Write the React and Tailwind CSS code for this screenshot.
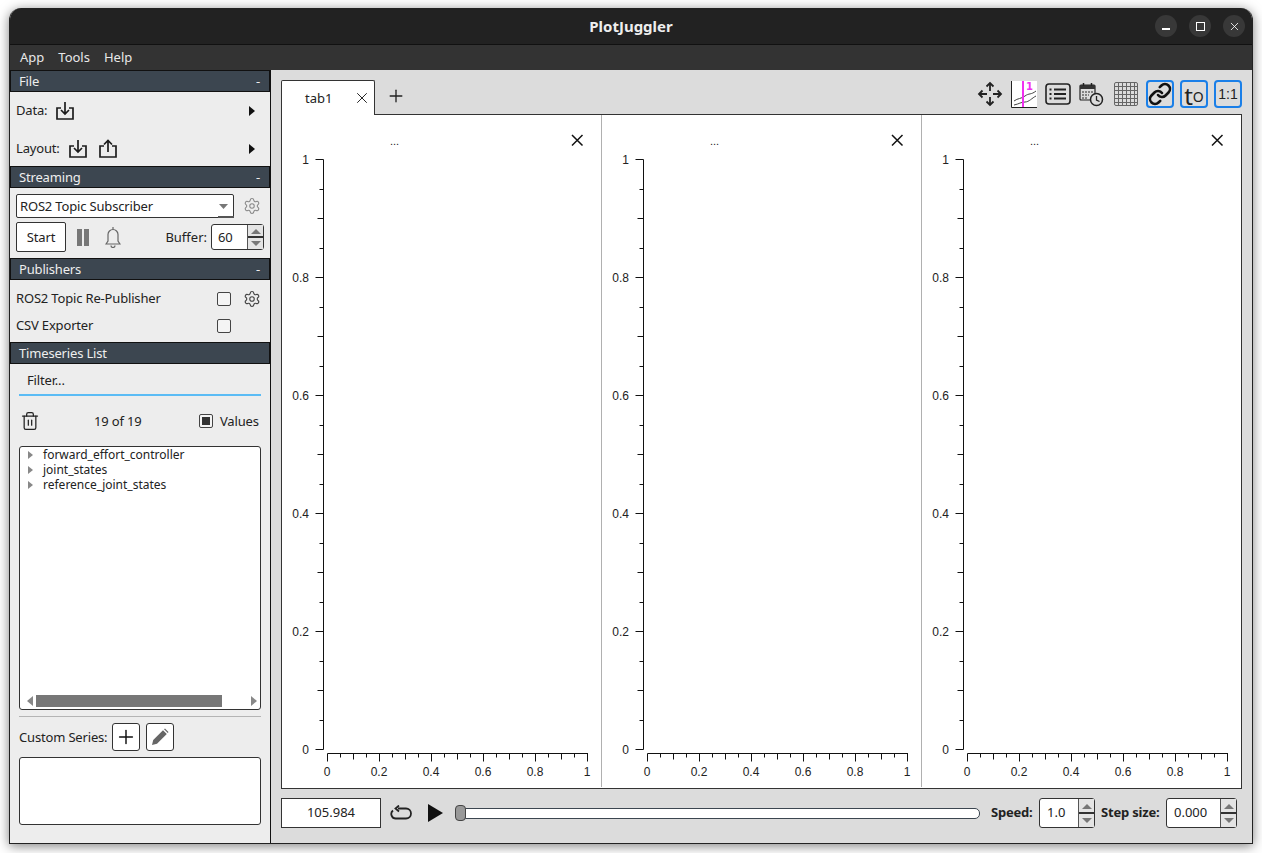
import React from "react";
import { Settings, Trash2, Plus, X, Link } from "lucide-react";

function SectionHeader({ title, collapse = true }) {
  return (
    <div className="-mt-px flex h-[22px] items-center justify-between border border-[#111] bg-[#3c4650] pl-2 pr-[9px] pt-px text-[13px] text-[#eeeeee]">
      <span>{title}</span>
      {collapse && <span>-</span>}
    </div>
  );
}

function TrayIcon({ up = false }) {
  return (
    <svg width="20" height="20" viewBox="0 0 20 20" fill="none" stroke="#1c1c1c" strokeWidth="1.7">
      <path d="M6 7H2v11h16V7h-4" />
      {up ? (
        <path d="M10 13V1.500M6 5.500l4-4 4 4" />
      ) : (
        <path d="M10 1v12M6 9l4 4 4-4" />
      )}
    </svg>
  );
}

function RightArrow() {
  return (
    <svg width="8" height="10" viewBox="0 0 8 10">
      <path d="M1 0l6 5-6 5z" fill="#111" />
    </svg>
  );
}

function Spin({ value, width, height, textClass = "" }) {
  return (
    <div className={`flex rounded-[3px] border border-[#333] bg-white ${width} ${height}`}>
      <div className={`flex flex-1 items-center text-[13px] text-[#222] ${textClass}`}>{value}</div>
      <div className="flex w-[16px] flex-col border-l border-[#555]">
        <div className="flex flex-1 items-center justify-center border-b border-[#333] bg-[#e4e4e4]">
          <svg width="10" height="6"><path d="M0 6L5 1l5 5z" fill="#777" /></svg>
        </div>
        <div className="flex flex-1 items-center justify-center border-t border-[#333] bg-[#e4e4e4]">
          <svg width="10" height="6"><path d="M0 0l5 5 5-5z" fill="#777" /></svg>
        </div>
      </div>
    </div>
  );
}

function Checkbox() {
  return <div className="h-[14px] w-[14px] rounded-[2px] border border-[#444] bg-[#f4f4f4]" />;
}

function TreeRow({ label }) {
  return (
    <div className="flex h-[15px] items-center tracking-normal">
      <svg width="5" height="8" className="ml-[8px] mr-[10px]">
        <path d="M0 0l5 4-5 4z" fill="#888" />
      </svg>
      <span className="text-[12px] text-[#222]">{label}</span>
    </div>
  );
}

function Sidebar() {
  return (
    <div className="flex w-[261px] flex-none flex-col border-r border-[#111] bg-[#ededed] pt-px text-[13px] tracking-[-0.17px] text-[#222]">
      <SectionHeader title="File" />
      <div className="h-[75px] pl-[6px] pr-[14px]">
        <div className="flex h-[38px] items-center">
          <span>Data:</span>
          <span className="ml-[8px]"><TrayIcon /></span>
          <span className="ml-auto"><RightArrow /></span>
        </div>
        <div className="flex h-[37px] items-center">
          <span>Layout:</span>
          <span className="ml-[8px]"><TrayIcon /></span>
          <span className="ml-[10px]"><TrayIcon up /></span>
          <span className="ml-auto"><RightArrow /></span>
        </div>
      </div>

      <SectionHeader title="Streaming" />
      <div className="h-[71px] px-[6px] pt-[6px]">
        <div className="flex items-center">
          <div className="relative flex h-[24px] w-[218px] items-center rounded-[2px] border border-[#333] bg-white pl-[3px] pt-px">
            ROS2 Topic Subscriber
            <svg width="9" height="5" className="absolute right-[5px] top-[9px]">
              <path d="M0 0h9L4.500 5z" fill="#777" />
            </svg>
            <div className="absolute bottom-[-1px] right-[-1px] h-[2px] w-[16px] bg-[#555]" />
          </div>
          <Settings size={18} strokeWidth={1.4} className="ml-[9px] text-[#888]" />
        </div>
        <div className="mt-[4px] flex items-center">
          <div className="flex h-[30px] w-[50px] items-center justify-center rounded-[2px] border border-[#333] bg-white pt-px">
            Start
          </div>
          <div className="ml-[11px] flex gap-[2px]">
            <div className="h-[17px] w-[5px] bg-[#777]" />
            <div className="h-[17px] w-[5px] bg-[#777]" />
          </div>
          <svg width="16" height="22" viewBox="0 0 16 22" fill="none" stroke="#666" strokeWidth="1.200" className="ml-[16px]">
            <path d="M8 1v2M3 15V8.500a5 5 0 0 1 10 0V15l2 3H1zM6 19.500a2 2 0 0 0 4 0" />
          </svg>
          <span className="ml-auto mr-[4px] pt-px tracking-normal">Buffer:</span>
          <Spin value="60" width="w-[53px]" height="h-[26px]" textClass="pl-[6px] pt-px" />
        </div>
      </div>

      <SectionHeader title="Publishers" />
      <div className="h-[63px] px-[6px] pt-[5px]">
        <div className="flex h-[27px] items-center">
          <span className="w-[201px]">ROS2 Topic Re-Publisher</span>
          <Checkbox />
          <Settings size={18} strokeWidth={1.5} className="ml-[12px] text-[#444]" />
        </div>
        <div className="flex h-[27px] items-center">
          <span className="w-[201px]">CSV Exporter</span>
          <Checkbox />
        </div>
      </div>

      <SectionHeader title="Timeseries List" collapse={false} />
      <div className="flex flex-1 flex-col px-[9px]">
        <div className="mt-[4px] flex h-[28px] items-center border-b-2 border-[#5bbcf5] pl-[8px]">
          Filter...
        </div>
        <div className="mt-[11px] flex h-[28px] items-center">
          <Trash2 size={20} strokeWidth={1.5} className="ml-px text-[#222]" />
          <span className="ml-[54px] whitespace-nowrap pt-px">19 of 19</span>
          <div className="ml-auto flex h-[14px] w-[14px] items-center justify-center rounded-[2px] border border-[#444] bg-[#f4f4f4]">
            <div className="h-[8px] w-[8px] bg-[#333]" />
          </div>
          <span className="ml-[7px] w-[41px] pt-px">Values</span>
        </div>
        <div className="mt-[11px] flex h-[264px] flex-col rounded-[3px] border border-[#333] bg-white">
          <TreeRow label="forward_effort_controller" />
          <TreeRow label="joint_states" />
          <TreeRow label="reference_joint_states" />
          <div className="mb-[2px] mt-auto flex h-[12px] items-center">
            <svg width="6" height="10" className="ml-[7px]"><path d="M6 0L0 5l6 5z" fill="#888" /></svg>
            <div className="ml-[3px] h-[12px] w-[186px] bg-[#777]" />
            <svg width="6" height="10" className="ml-[29px]"><path d="M0 0l6 5-6 5z" fill="#888" /></svg>
          </div>
        </div>
        <div className="mt-[6px] h-px bg-[#b4b4b4]" />
        <div className="mt-[6px] flex h-[28px] items-center">
          <span className="w-[87px] whitespace-nowrap pt-px">Custom Series:</span>
          <div className="ml-[6px] flex h-[28px] w-[28px] items-center justify-center rounded-[3px] border border-[#333] bg-white">
            <Plus size={22} strokeWidth={1.6} className="text-[#111]" />
          </div>
          <div className="ml-[6px] flex h-[28px] w-[28px] items-center justify-center rounded-[3px] border border-[#333] bg-white">
            <svg width="18" height="18" viewBox="0 0 18 18">
              <path d="M1 17l1.200-5L12 2.200 15.800 6 6 15.800zM13 1.200l1-.7 3.500 3.500-.7 1z" fill="#666" />
            </svg>
          </div>
        </div>
        <div className="mt-[6px] h-[68px] rounded-[3px] border border-[#333] bg-white" />
      </div>
    </div>
  );
}

function ToolButton({ children }) {
  return (
    <div className="flex h-[28px] w-[28px] items-center justify-center rounded-[4px] border-2 border-[#1a7fe8]">
      {children}
    </div>
  );
}

function Toolbar() {
  return (
    <div className="ml-auto flex h-[28px] items-center self-start">
      <svg width="26" height="26" viewBox="0 0 26 26" fill="none" stroke="#222" strokeWidth="1.800">
        <path d="M13 3v7M13 16v7M3 13h7M16 13h7" />
        <path d="M9.500 5.500L13 2l3.500 3.500M9.500 20.500L13 24l3.500-3.500M5.500 9.500L2 13l3.500 3.500M20.500 9.500L24 13l-3.500 3.500" />
      </svg>
      <svg width="26" height="27" viewBox="0 0 26 27" className="ml-[8px]">
        <rect x="0" y="0" width="26" height="26" fill="#fff" />
        <path d="M.5 0v26.500H26" fill="none" stroke="#222" />
        <path d="M3 20C7 17 10 18 14 15S20 14 25 10M3 24C8 23 10 21 14 21S21 17 25 15" fill="none" stroke="#444" strokeWidth="1" />
        <rect x="11" y="0" width="2" height="26" fill="#f030f0" />
        <text x="15" y="9" fontSize="10" fontWeight="700" fill="#f030f0" fontFamily="DejaVu Sans, sans-serif">1</text>
      </svg>
      <svg width="26" height="22" viewBox="0 0 26 22" fill="none" stroke="#222" className="ml-[8px]">
        <rect x="1" y="1" width="24" height="20" rx="3" strokeWidth="1.600" />
        <path d="M9 6.500h12M9 11h12M9 15.500h12" strokeWidth="1.800" />
        <path d="M4.500 6.500h2M4.500 11h2M4.500 15.500h2" strokeWidth="1.800" />
      </svg>
      <svg width="25" height="25" viewBox="0 0 25 25" fill="none" stroke="#222" className="ml-[8px]">
        <rect x="1" y="3" width="15" height="15" rx="1" strokeWidth="1.200" />
        <rect x="1" y="3" width="15" height="4" fill="#333" stroke="none" />
        <path d="M4.500 1v3M12.500 1v3" strokeWidth="1.500" />
        <path d="M3 10h11M3 13h7M3 16h6" stroke="#666" strokeWidth="1.500" strokeDasharray="2 1" />
        <circle cx="17.500" cy="17.500" r="6" fill="#dcdcdc" strokeWidth="1.500" />
        <path d="M17.500 14v4l3 1.500" strokeWidth="1.300" />
      </svg>
      <svg width="24" height="24" viewBox="0 0 24 24" fill="none" stroke="#666" className="ml-[10px]">
        <rect x=".5" y=".5" width="23" height="23" rx="1.500" />
        <path d="M4.500 0v24M8.500 0v24M12.500 0v24M16.500 0v24M20.500 0v24M0 4.500h24M0 8.500h24M0 12.500h24M0 16.500h24M0 20.500h24" />
      </svg>
      <div className="ml-[8px]">
        <ToolButton>
          <Link size={24} strokeWidth={2.6} className="flex-none text-[#111]" />
        </ToolButton>
      </div>
      <div className="ml-[6px]">
        <ToolButton>
          <div className="flex h-[24px] items-end leading-[20px] text-[#222]">
            <span className="text-[24px]">t</span>
            <span className="text-[14px] leading-[18px]">O</span>
          </div>
        </ToolButton>
      </div>
      <div className="ml-[6px]">
        <ToolButton>
          <span className="text-[14px] text-[#222] [font-family:'Liberation_Sans',sans-serif]">1:1</span>
        </ToolButton>
      </div>
    </div>
  );
}

const ticks = Array.from({ length: 21 }, (_, i) => i);
const labels = ["0", "0.2", "0.4", "0.6", "0.8", "1"];

function Plot({ last = false }) {
  return (
    <div className={`flex-none ${last ? "w-[319px]" : "mb-[1px] w-[320px] border-r border-[#b0b0b0]"}`}>
      <svg width="319" height="671" viewBox="0 0 319 671" className="block">
        <g fontFamily="Liberation Sans, sans-serif" fontSize="12" fill="#222">
          <text x="112.500" y="30" fontSize="11" textAnchor="middle">...</text>
          {labels.map((l, i) => (
            <text key={"y" + l} x="27" y={49 + (5 - i) * 118} textAnchor="end">{l}</text>
          ))}
          {labels.map((l, i) => (
            <text key={"x" + l} x={45 + i * 52} y="660.500" textAnchor="middle">{l}</text>
          ))}
        </g>
        <path d="M290 20l10.500 10.500M300.500 20L290 30.500" stroke="#111" strokeWidth="1.500" fill="none" />
        <g stroke="#111" fill="none">
          <path d="M41.500 44.500V634.500" />
          <path d="M45.500 638.500H306" />
          {ticks.map((i) => {
            const len = i % 4 === 0 ? 8 : i % 2 === 0 ? 6 : 4;
            const y = Math.round(44 + i * 29.500) + 0.500;
            const x = 45.500 + i * 13;
            return (
              <g key={i}>
                <path d={`M${41.500 - len} ${y}H41.500`} />
                <path d={`M${x} 638.500v${len}`} />
              </g>
            );
          })}
        </g>
      </svg>
    </div>
  );
}

function BottomBar() {
  return (
    <div className="mt-[9px] flex h-[30px] items-center text-[13px] text-[#222]">
      <div className="flex h-[30px] w-[100px] items-center justify-center border border-[#333] bg-white">
        105.984
      </div>
      <svg width="22" height="16" viewBox="0 0 22 16" fill="none" stroke="#222" strokeWidth="1.800" className="ml-[9px]">
        <path d="M8 3.500h8a4.500 4.500 0 0 1 0 10H6a4.500 4.500 0 0 1-3-8" />
        <path d="M9 .500L5.500 3.500 9 6.500" />
      </svg>
      <svg width="15" height="18" viewBox="0 0 15 18" className="ml-[16px]">
        <path d="M0 0l15 9-15 9z" fill="#111" />
      </svg>
      <div className="ml-[12px] flex flex-1 items-center">
        <div className="z-10 h-[16px] w-[11px] rounded-[4px] border border-[#444] bg-[#999]" />
        <div className="-ml-px h-[11px] flex-1 rounded-r-[5px] border border-[#3c4650] bg-white" />
      </div>
      <span className="ml-[11px] w-[42px] whitespace-nowrap font-bold tracking-[-0.2px]">Speed:</span>
      <span className="ml-[6px]">
        <Spin value="1.0" width="w-[56px]" height="h-[30px]" textClass="pl-[7px]" />
      </span>
      <span className="ml-[6px] w-[59px] whitespace-nowrap font-bold tracking-[-0.2px]">Step size:</span>
      <span className="ml-[6px] mr-[5px]">
        <Spin value="0.000" width="w-[71px]" height="h-[30px]" textClass="pl-[7px]" />
      </span>
    </div>
  );
}

function WinButton({ children }) {
  return (
    <div className="flex h-[22px] w-[22px] items-center justify-center rounded-full bg-[#383838] text-white">
      {children}
    </div>
  );
}

export default function App() {
  return (
    <div className="h-[853px] w-[1262px] overflow-hidden bg-white pb-[9px] pl-[9px] pr-[9px] pt-[8px] [font-family:'Noto_Sans',sans-serif]">
      <div className="flex h-[836px] w-[1244px] flex-col overflow-hidden rounded-t-[12px] border border-t-0 border-[#222] shadow-[0_2px_12px_rgba(0,0,0,0.5)]">
        <div className="relative flex h-[37px] flex-none items-center justify-center border-b border-[#111] bg-[#222222] text-[15px] font-bold text-[#eeeeee]">
          PlotJuggler
          <div className="absolute right-[7px] top-[7px] flex gap-[12px]">
            <WinButton><div className="mt-[6px] h-[1.500px] w-[8px] bg-white" /></WinButton>
            <WinButton><div className="h-[9px] w-[9px] border border-white" /></WinButton>
            <WinButton><X size={13} strokeWidth={1.500} /></WinButton>
          </div>
        </div>
        <div className="flex h-[25px] flex-none items-center gap-[14px] bg-[#333333] pl-[10px] text-[13px] text-[#e8e8e8]">
          <span>App</span>
          <span>Tools</span>
          <span>Help</span>
        </div>
        <div className="flex min-h-0 flex-1">
          <Sidebar />
          <div className="flex min-w-0 flex-1 flex-col bg-[#dcdcdc] pl-[10px] pr-[10px] pt-[10px]">
            <div className="flex h-[35px] flex-none items-start">
              <div className="relative z-10 flex h-[35px] w-[94px] items-center rounded-t-[2px] border border-b-0 border-[#333] bg-white pl-[23px] pt-px text-[13px] text-[#222]">
                tab1
                <X size={18} strokeWidth={1.300} className="absolute right-[3px] top-[8px]" />
              </div>
              <Plus size={20} strokeWidth={1.600} className="ml-[11px] mt-[6px] text-[#222]" />
              <Toolbar />
            </div>
            <div className="-mt-px flex h-[675px] flex-none border border-[#333] bg-white">
              <Plot />
              <Plot />
              <Plot last />
            </div>
            <BottomBar />
          </div>
        </div>
      </div>
    </div>
  );
}
